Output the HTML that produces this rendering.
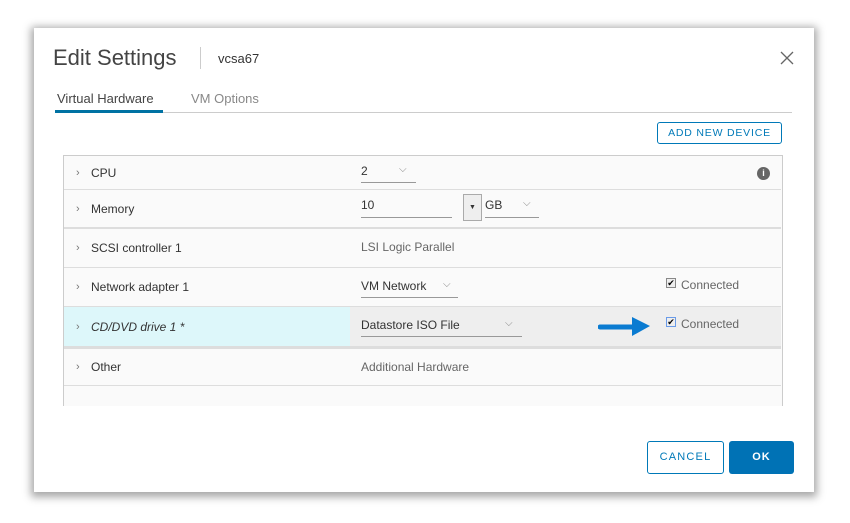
<!DOCTYPE html>
<html><head><style>
*{box-sizing:border-box;margin:0;padding:0}
body{width:850px;height:523px;background:#fff;font-family:"Liberation Sans",sans-serif;position:relative;overflow:hidden;color:#333}
.dlg{position:absolute;left:34px;top:28px;width:780px;height:464px;background:#fff;box-shadow:0 2px 8px 3px rgba(0,0,0,.35)}
.a{position:absolute;white-space:nowrap}
.row{position:absolute;left:64px;width:717px;border-bottom:1px solid #ddd;background:#fafafa;font-size:12px}
.row .l{position:absolute;left:27px;top:50%;transform:translateY(-50%)}
.row .c{position:absolute;left:12px;top:50%;transform:translateY(-52%);color:#777;font-size:11px}
.v{position:absolute;left:297px;color:#666}
.sel{position:absolute;border-bottom:1px solid #999;font-size:12px;color:#333}
.cb{position:absolute;width:10px;height:10px;border:1px solid #888;background:#eee;font-size:9px;line-height:8px;text-align:center;color:#000}
</style></head><body>
<div class="dlg"></div>
<div class="a" style="left:53px;top:45px;font-size:22px;color:#444">Edit Settings</div>
<div class="a" style="left:200px;top:47px;width:1px;height:22px;background:#ccc"></div>
<div class="a" style="left:218px;top:51px;font-size:13px;color:#333">vcsa67</div>
<svg class="a" style="left:780px;top:51px" width="14" height="14"><path d="M1 1L13 13M13 1L1 13" stroke="#666" stroke-width="1.3"/></svg>
<div class="a" style="left:57px;top:91px;font-size:13px;color:#444">Virtual Hardware</div>
<div class="a" style="left:191px;top:91px;font-size:13px;color:#888">VM Options</div>
<div class="a" style="left:55px;top:112px;width:737px;height:1px;background:#ccc"></div>
<div class="a" style="left:55px;top:110px;width:108px;height:3px;background:#0072a3"></div>
<div class="a" style="left:657px;top:122px;width:125px;height:22px;border:1px solid #0079b8;border-radius:3px;color:#0079b8;font-size:10.5px;letter-spacing:.8px;text-align:center;line-height:20px">ADD NEW DEVICE</div>
<div class="a" style="left:63px;top:155px;width:720px;height:251px;border:1px solid #ccc;border-bottom:none;background:#fafafa"></div>
<div class="row" style="top:156px;height:34px"><span class="c">›</span><span class="l">CPU</span>
<div class="sel" style="left:297px;top:8px;width:55px;height:19px">2<span style="position:absolute;left:38px;color:#888;font-size:10px">⌵</span></div>
<div style="position:absolute;left:693px;top:11px;width:13px;height:13px;border-radius:50%;background:#666;color:#fff;font-size:9px;font-weight:bold;text-align:center;line-height:13px">i</div></div>
<div class="row" style="top:190px;height:39px;border-bottom:2px solid #ddd"><span class="c">›</span><span class="l">Memory</span>
<div class="sel" style="left:297px;top:8px;width:91px;height:20px">10</div>
<div style="position:absolute;left:399px;top:4px;width:19px;height:27px;border:1px solid #aaa;background:#eee;font-size:7px;text-align:center;line-height:25px">▼</div>
<div class="sel" style="left:421px;top:8px;width:54px;height:20px">GB<span style="position:absolute;left:38px;color:#888;font-size:10px">⌵</span></div></div>
<div class="row" style="top:229px;height:39px"><span class="c">›</span><span class="l">SCSI controller 1</span><span class="v" style="top:11px">LSI Logic Parallel</span></div>
<div class="row" style="top:268px;height:39px"><span class="c">›</span><span class="l">Network adapter 1</span>
<div class="sel" style="left:297px;top:11px;width:97px;height:19px">VM Network<span style="position:absolute;left:82px;color:#888;font-size:10px">⌵</span></div>
<div class="cb" style="left:602px;top:10px">✔</div><span style="position:absolute;left:617px;top:10px;color:#666">Connected</span></div>
<div class="row" style="top:307px;height:40px;background:#eee"><div style="position:absolute;left:0;top:0;width:286px;height:39px;background:#ddf7fa"></div><span class="c">›</span><span class="l" style="font-style:italic">CD/DVD drive 1 *</span>
<div class="sel" style="left:297px;top:11px;width:161px;height:19px">Datastore ISO File<span style="position:absolute;left:144px;color:#888;font-size:10px">⌵</span></div>
<div class="cb" style="left:602px;top:10px;border-color:#6a9be8">✔</div><span style="position:absolute;left:617px;top:10px;color:#666">Connected</span></div>
<svg class="a" style="left:598px;top:316px" width="54" height="22"><path d="M2 11H36" stroke="#0a7bd1" stroke-width="5" stroke-linecap="round"/><path d="M34 1L52 10L34 20Z" fill="#0a7bd1"/></svg>
<div class="a" style="left:64px;top:347px;width:717px;height:2px;background:#ddd"></div>
<div class="row" style="top:349px;height:37px"><span class="c">›</span><span class="l">Other</span><span class="v" style="top:11px">Additional Hardware</span></div>
<div class="a" style="left:647px;top:441px;width:77px;height:33px;border:1px solid #0079b8;border-radius:3px;color:#0079b8;font-size:11px;letter-spacing:1.2px;text-align:center;line-height:31px">CANCEL</div>
<div class="a" style="left:729px;top:441px;width:65px;height:33px;background:#0072b5;border-radius:3px;color:#fff;font-size:11px;font-weight:bold;letter-spacing:1px;text-align:center;line-height:33px">OK</div>
</body></html>
